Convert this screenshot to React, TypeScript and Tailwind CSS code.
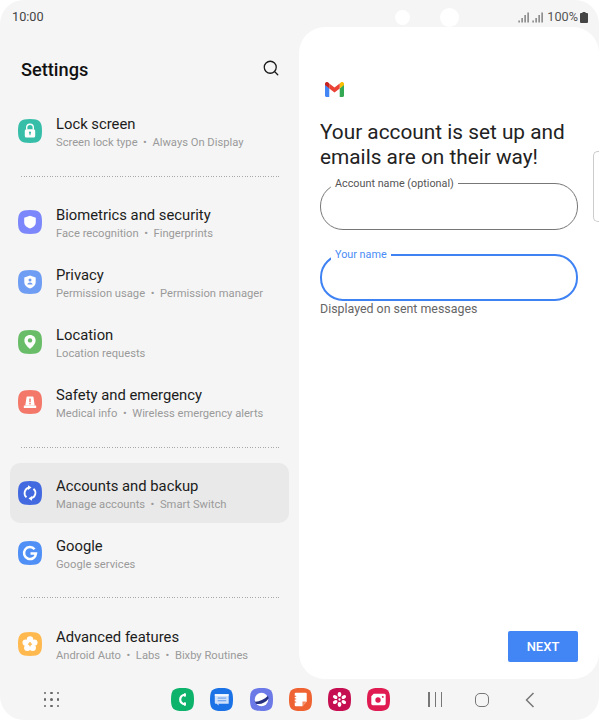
import type { ReactNode } from 'react'
import { Search } from 'lucide-react'

const font = { fontFamily: 'Roboto, sans-serif' }

function Squircle({ color, size = 24, children }: { color: string; size?: number; children?: ReactNode }) {
  return (
    <svg width={size} height={size} viewBox="0 0 24 24" className="shrink-0 block">
      <path d="M12 0C21.500 0 24 2.500 24 12S21.500 24 12 24 0 21.500 0 12 2.500 0 12 0Z" fill={color} />
      {children}
    </svg>
  )
}

const LockIcon = () => (
  <Squircle color="#36bea9">
    <path d="M8.700 10.500V8.600a3.300 3.300 0 0 1 6.600 0v1.900" fill="none" stroke="#fff" strokeWidth="1.400" />
    <rect x="6.800" y="10.200" width="10.400" height="8.300" rx="1.600" fill="#fff" />
    <circle cx="12" cy="13.600" r="1.100" fill="#36bea9" />
    <rect x="11.500" y="14" width="1" height="2.200" fill="#36bea9" />
  </Squircle>
)

const ShieldIcon = () => (
  <Squircle color="#7c87fb">
    <path d="M12 5.800l5.800 1.900v4.500c0 3.100-2.500 5.200-5.800 6.200-3.300-1-5.800-3.100-5.800-6.200V7.700Z" fill="#fff" />
  </Squircle>
)

const PrivacyIcon = () => (
  <Squircle color="#6f9df3">
    <path d="M12 5.500l5.700 1.900v4.600c0 3.200-2.500 5.300-5.700 6.500-3.200-1.200-5.700-3.300-5.700-6.500V7.400Z" fill="#fff" />
    <circle cx="12" cy="10" r="1.500" fill="#6f9df3" />
    <path d="M9.300 14.600c.3-1.500 1.300-2.200 2.700-2.200s2.400.7 2.700 2.200Z" fill="#6f9df3" />
  </Squircle>
)

const LocationIcon = () => (
  <Squircle color="#69bd69">
    <path d="M12 5c3.300 0 5.600 2.400 5.600 5.400 0 3.400-3 6-5.600 8.600-2.600-2.600-5.600-5.200-5.600-8.600C6.400 7.400 8.700 5 12 5Z" fill="#fff" />
    <circle cx="12" cy="10.400" r="2.200" fill="#69bd69" />
  </Squircle>
)

const SafetyIcon = () => (
  <Squircle color="#f37869">
    <path d="M8.500 7.500c0-.6.400-1 1-1h5c.6 0 1 .4 1 1l1.200 8H7.300Z" fill="#fff" />
    <rect x="5.800" y="15.500" width="12.400" height="2.500" rx=".5" fill="#fff" />
    <rect x="11.300" y="8.500" width="1.400" height="3.800" fill="#f37869" />
    <rect x="11.300" y="13" width="1.400" height="1.400" fill="#f37869" />
  </Squircle>
)

const SyncIcon = () => (
  <Squircle color="#4269e0">
    <path d="M8.500 16.300A5.600 5.600 0 0 1 11 6.600" fill="none" stroke="#fff" strokeWidth="1.800" />
    <path d="M10 4.300L13.500 6.600 10 8.900Z" fill="#fff" />
    <path d="M15.500 7.700A5.600 5.600 0 0 1 13 17.400" fill="none" stroke="#fff" strokeWidth="1.800" />
    <path d="M14 15.100L10.500 17.400 14 19.700Z" fill="#fff" />
  </Squircle>
)

const GoogleIcon = () => (
  <Squircle color="#4f8ff6">
    <path d="M16.600 8.200A6 6 0 1 0 18 12.500h-5.500" fill="none" stroke="#fff" strokeWidth="2.500" />
  </Squircle>
)

const FlowerIcon = () => (
  <Squircle color="#ffb94f">
    <g fill="#fff">
      <circle cx="12" cy="7.500" r="3.200" />
      <circle cx="16.300" cy="10.600" r="3.200" />
      <circle cx="14.700" cy="15.800" r="3.200" />
      <circle cx="9.300" cy="15.800" r="3.200" />
      <circle cx="7.700" cy="10.600" r="3.200" />
      <circle cx="12" cy="12" r="3" />
    </g>
    <path d="M11.300 10h1.400v1.400h1.400v1.400h-1.400v1.400h-1.400v-1.400H9.900v-1.400h1.400Z" fill="#ffb94f" />
  </Squircle>
)

function Row({ icon, title, sub, className }: { icon: ReactNode; title: string; sub: string[]; className?: string }) {
  return (
    <div className={`h-[60px] mx-[10px] px-[8px] flex items-center ${className ?? ''}`}>
      <div className="mb-[5px]">{icon}</div>
      <div className="ml-[14px] pt-[1px]">
        <div className="text-[14.800px] leading-[18px] text-[#1c1c1c]">{title}</div>
        <div className="mt-[1px] text-[11.200px] leading-[18px] text-[#9a9a9a] whitespace-pre">{sub.join('  •  ')}</div>
      </div>
    </div>
  )
}

function Divider({ className }: { className: string }) {
  return (
    <div className={`ml-[21px] mr-[18px] h-[1px] bg-[repeating-linear-gradient(90deg,#a8a8a8_0_1px,transparent_1px_2.600px)] ${className}`} />
  )
}

function Field({ label, focused }: { label: string; focused?: boolean }) {
  return (
    <fieldset className={focused ? 'h-[52px] rounded-[23px] border-2 border-[#3f82f3] pl-[9px]' : 'h-[52px] rounded-[23px] border border-[#777777] pl-[10px]'}>
      <legend className={focused ? 'px-[4px] text-[10.800px] leading-[11px] text-[#4a8cf5]' : 'px-[4px] text-[10.800px] leading-[11px] text-[#555555]'}>{label}</legend>
    </fieldset>
  )
}

function StatusBars() {
  return (
    <svg width="13" height="11" viewBox="0 0 13 11" className="block">
      <rect x="0.500" y="8.500" width="1.200" height="2" fill="#666" />
      <rect x="3.500" y="6" width="1.200" height="4.500" fill="#666" />
      <rect x="6.500" y="3" width="1.200" height="7.500" fill="#666" />
      <rect x="9.500" y="0.500" width="1.200" height="10" fill="#666" />
    </svg>
  )
}

function AppsGrid() {
  const dots = [0, 1, 2, 3, 4, 5, 6, 7, 8]
  return (
    <div className="grid grid-cols-3 gap-x-[4.300px] gap-y-[4.300px] w-[15px]">
      {dots.map((d) => (
        <span key={d} className="w-[2.400px] h-[2.400px] rounded-full bg-[#666666]" />
      ))}
    </div>
  )
}

export default function App() {
  return (
    <div className="w-[599px] h-[720px] bg-white overflow-hidden" style={font}>
      <div className="relative h-full rounded-[24px] bg-[#f5f5f5] flex flex-col">
        {/* Status bar */}
        <div className="h-[27px] shrink-0 flex items-center justify-between pl-[12px] pr-[11px] pt-[8px]">
          <span className="text-[12.700px] leading-none text-[#444444]">10:00</span>
          <div className="flex items-center text-[#555555]">
            <StatusBars />
            <span className="w-[1px]" />
            <StatusBars />
            <span className="text-[12.700px] leading-none ml-[2px]">100%</span>
            <svg width="8" height="11" viewBox="0 0 8 11" className="ml-[2px]">
              <path d="M2.500 0h3v1H7a1 1 0 0 1 1 1v8a1 1 0 0 1-1 1H1a1 1 0 0 1-1-1V2a1 1 0 0 1 1-1h1.500Z" fill="#444" />
            </svg>
          </div>
        </div>
        {/* camera cutouts */}
        <span className="absolute left-[395px] top-[10px] w-[15px] h-[15px] rounded-full bg-white" />
        <span className="absolute left-[440px] top-[8px] w-[19px] h-[19px] rounded-full bg-white" />

        <div className="h-[652px] flex shrink-0">
          {/* Settings list */}
          <div className="w-[299px] shrink-0">
            <div className="h-[76px] flex items-center justify-between pl-[21px] pr-[19px] pb-[10px] pt-[20px]">
              <span className="text-[18.200px] font-medium text-[#111111]">Settings</span>
              <Search size={18} strokeWidth={1.700} className="text-[#1a1a1a] mb-[4px]" />
            </div>
            <Row icon={<LockIcon />} title="Lock screen" sub={['Screen lock type', 'Always On Display']} />
            <Divider className="mt-[13px] mb-[17px]" />
            <Row icon={<ShieldIcon />} title="Biometrics and security" sub={['Face recognition', 'Fingerprints']} />
            <Row icon={<PrivacyIcon />} title="Privacy" sub={['Permission usage', 'Permission manager']} />
            <Row icon={<LocationIcon />} title="Location" sub={['Location requests']} />
            <Row icon={<SafetyIcon />} title="Safety and emergency" sub={['Medical info', 'Wireless emergency alerts']} />
            <Divider className="mt-[13px] mb-[15px]" />
            <Row className="pt-[4px] rounded-[10px] bg-[#e9e9e9]" icon={<SyncIcon />} title="Accounts and backup" sub={['Manage accounts', 'Smart Switch']} />
            <Row className="mt-[2px]" icon={<GoogleIcon />} title="Google" sub={['Google services']} />
            <Divider className="mt-[12px] mb-[18px]" />
            <Row icon={<FlowerIcon />} title="Advanced features" sub={['Android Auto', 'Labs', 'Bixby Routines']} />
          </div>

          {/* Gmail setup panel */}
          <div className="relative flex-1 rounded-[26px] bg-white pl-[21px] pr-[21px] flex flex-col">
            <svg width="19" height="15" viewBox="0 0 20 15" preserveAspectRatio="none" className="mt-[55px] ml-[5px] shrink-0">
              <path d="M0 2.500V13.500C0 14.300.7 15 1.500 15H4.500V6.500Z" fill="#4285f4" />
              <path d="M15.500 6.500V15h3c.8 0 1.500-.7 1.500-1.500V2.500Z" fill="#34a853" />
              <path d="M15.500 1.500V6.500L20 3V2C20 .2 17.900-.7 16.600.4Z" fill="#fbbc04" />
              <path d="M4.500 6.500V1.500L10 5.600 15.500 1.500V6.500L10 10.600Z" fill="#ea4335" />
              <path d="M0 2V3L4.500 6.500V1.500L3.400.4C2.100-.7 0 .2 0 2Z" fill="#c5221f" />
            </svg>
            <h1 className="mt-[23px] text-[20.800px] leading-[25px] font-normal text-[#222222]">
              Your account is set up and
              <br />
              emails are on their way!
            </h1>
            <div className="mt-[8px]">
              <Field label="Account name (optional)" />
            </div>
            <div className="mt-[19px]">
              <Field focused label="Your name" />
            </div>
            <p className="text-[12.400px] leading-[16px] text-[#666666]">Displayed on sent messages</p>
            <div className="mt-auto mb-[17px] self-end">
              <button className="block w-[70px] h-[31px] rounded-[2px] bg-[#4285f4] text-[13px] font-medium text-white">NEXT</button>
            </div>
            {/* next pane peeking in */}
            <span className="absolute right-0 top-[124px] w-[6px] h-[71px] rounded-l-[5px] border border-r-0 border-[#cccccc]" />
          </div>
        </div>

        {/* Dock */}
        <div className="flex-1 flex items-center pl-[44px]">
          <AppsGrid />
          <div className="ml-[112px] flex items-center gap-[16.300px]">
            <Squircle color="#0db26b" size={23}>
              <path d="M15 6.800C11.500 7.300 9.600 9.300 9.600 12S11.500 16.700 15 17.200" fill="none" stroke="#fff" strokeWidth="2.300" />
              <rect x="13.400" y="5.400" width="2.200" height="3.800" rx=".8" fill="#fff" />
              <rect x="13.400" y="14.800" width="2.200" height="3.800" rx=".8" fill="#fff" />
            </Squircle>
            <Squircle color="#1a72e6" size={23}>
              <path d="M5 6.500h14.500v10H9v1.800l-2-1.800H6a1 1 0 0 1-1-1Z" fill="#cfe0fa" />
              <rect x="5" y="6.500" width="14.500" height="1.600" fill="#fff" />
              <rect x="8" y="10" width="9" height="1" fill="#5b97ec" />
              <rect x="8" y="12.800" width="9" height="1" fill="#5b97ec" />
            </Squircle>
            <Squircle color="#6c7ae8" size={23}>
              <circle cx="12" cy="12" r="7" fill="#fff" />
              <path d="M4.800 14.200c4 .4 10-1.800 14-6l.600 2.800c-3 4.400-8 6.500-12.800 5.600Z" fill="#27307f" />
            </Squircle>
            <Squircle color="#ef6232" size={23}>
              <path d="M7 5h10.500a1 1 0 0 1 1 1v8l-4.500 5H7a1 1 0 0 1-1-1V6a1 1 0 0 1 1-1Z" fill="#fff" />
              <path d="M5 8h2.500v1H5ZM5 11h2.500v1H5ZM5 14h2.500v1H5Z" fill="#ef6232" />
              <path d="M18.500 14H14v5Z" fill="#f4885f" />
            </Squircle>
            <Squircle color="#c60f50" size={23}>
              <g fill="#fff">
                <ellipse cx="12" cy="6.800" rx="1.900" ry="2.500" />
                <ellipse cx="12" cy="6.800" rx="1.900" ry="2.500" transform="rotate(60 12 12)" />
                <ellipse cx="12" cy="6.800" rx="1.900" ry="2.500" transform="rotate(120 12 12)" />
                <ellipse cx="12" cy="6.800" rx="1.900" ry="2.500" transform="rotate(180 12 12)" />
                <ellipse cx="12" cy="6.800" rx="1.900" ry="2.500" transform="rotate(240 12 12)" />
                <ellipse cx="12" cy="6.800" rx="1.900" ry="2.500" transform="rotate(300 12 12)" />
              </g>
              <circle cx="12" cy="12" r="1.200" fill="#fff" />
            </Squircle>
            <Squircle color="#df1b51" size={23}>
              <path d="M7 6h11a1.500 1.500 0 0 1 1.500 1.500v9A1.500 1.500 0 0 1 18 18H6a1.500 1.500 0 0 1-1.500-1.500V8.500Z" fill="#fff" />
              <circle cx="11.500" cy="12.500" r="2.800" fill="#df1b51" />
              <circle cx="16.500" cy="9.300" r="1" fill="#df1b51" />
            </Squircle>
          </div>
          <div className="ml-[38px] flex items-center">
            <div className="w-[14px] h-[15px] flex justify-between">
              <span className="w-[1.500px] h-full bg-[#777777]" />
              <span className="w-[1.500px] h-full bg-[#777777]" />
              <span className="w-[1.500px] h-full bg-[#777777]" />
            </div>
            <span className="ml-[33px] w-[14px] h-[14px] rounded-[5px] border-[1.500px] border-[#777777]" />
            <svg width="10" height="16" viewBox="0 0 10 16" className="ml-[36px]">
              <path d="M8.500 1L1.500 8l7 7" fill="none" stroke="#777777" strokeWidth="1.500" />
            </svg>
          </div>
        </div>
      </div>
    </div>
  )
}
